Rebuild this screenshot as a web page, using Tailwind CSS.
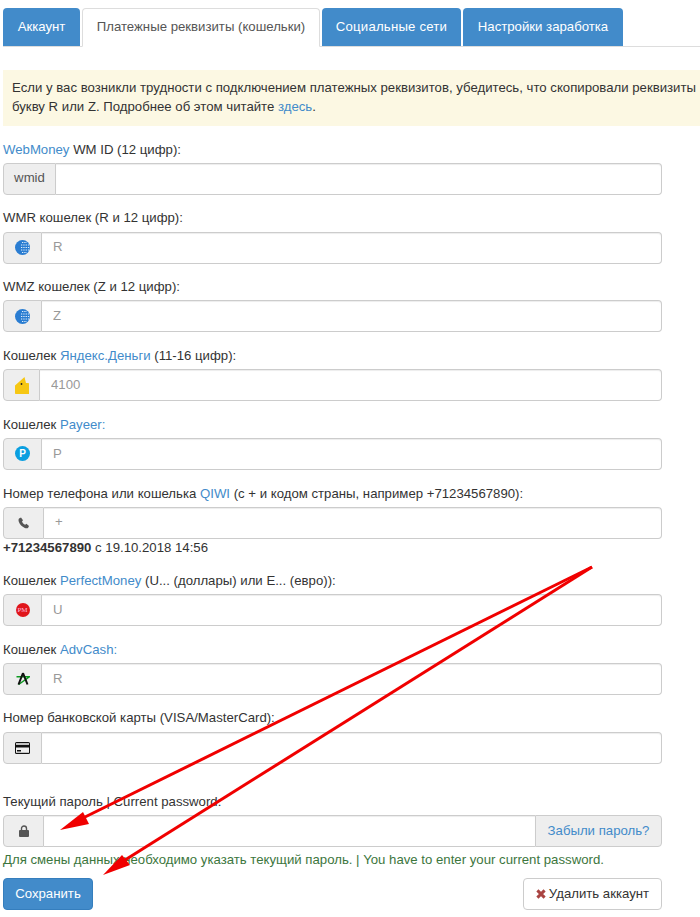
<!DOCTYPE html>
<html lang="ru">
<head>
<meta charset="utf-8">
<script src="https://cdn.jsdelivr.net/npm/@tailwindcss/browser@4"></script>
<title>Платежные реквизиты</title>
</head>
<body class="bg-white">
<div class="relative w-[700px] h-[917px] overflow-hidden font-['Liberation_Sans',Arial,sans-serif] text-[13.2px] leading-[18.6px] text-[#333]">
  <div class="pl-[3px] pt-[8px]">
    <div class="flex h-[39px] border-b border-[#ddd] items-start">
      <a class="w-[77px] h-[38px] flex items-center justify-center rounded-t-[4px] bg-[#428bca] text-white">Аккаунт</a>
      <a class="ml-[2px] w-[238px] h-[39px] flex items-center justify-center rounded-t-[4px] bg-white text-[#555] border border-[#ddd] border-b-white">Платежные реквизиты (кошельки)</a>
      <a class="ml-[2px] w-[139px] h-[38px] flex items-center justify-center rounded-t-[4px] bg-[#428bca] text-white tracking-[0.2px]">Социальные сети</a>
      <a class="ml-[2px] w-[160px] h-[38px] flex items-center justify-center rounded-t-[4px] bg-[#428bca] text-white">Настройки заработка</a>
    </div>

    <div class="mt-[23px] h-[56px] bg-[#fcf8e3] pl-[9px] pt-[9px] whitespace-nowrap overflow-hidden">
      <p>Если у вас возникли трудности с подключением платежных реквизитов, убедитесь, что скопировали реквизиты</p>
      <p>букву R или Z. Подробнее об этом читайте <a class="text-[#428bca]">здесь</a>.</p>
    </div>

    <div class="w-[659px] mt-[14.6px]">
      <div class="mb-[14.6px]">
        <label class="block mb-[3.6px]"><a class="text-[#428bca]">WebMoney</a> WM ID (12 цифр):</label>
        <div class="flex h-[32px]">
          <span class="w-[53px] flex items-center justify-center bg-[#eee] border border-[#ccc] rounded-l-[4px] text-[#555]">wmid</span>
          <input class="flex-1 min-w-0 border border-l-0 border-[#ccc] rounded-r-[4px] px-[11px] shadow-[inset_0_1px_1px_rgba(0,0,0,0.075)]">
        </div>
      </div>

      <div class="mb-[14.6px]">
        <label class="block mb-[3.6px]">WMR кошелек (R и 12 цифр):</label>
        <div class="flex h-[32px]">
          <span class="w-[39px] flex items-center justify-center bg-[#eee] border border-[#ccc] rounded-l-[4px]">
            <svg width="15" height="15" viewBox="0 0 15 15"><circle cx="7.5" cy="7.5" r="7.5" fill="#2a7dd2"/><path d="M7 2.5h5M6 5h8M6 7.5h8.500M6 10h8M7 12.5h5" stroke="#e4eff9" stroke-width="1.100" fill="none" stroke-dasharray="1.300 1"/></svg>
          </span>
          <input placeholder="R" class="flex-1 min-w-0 border border-l-0 border-[#ccc] rounded-r-[4px] px-[11px] placeholder:text-[#999] shadow-[inset_0_1px_1px_rgba(0,0,0,0.075)]">
        </div>
      </div>

      <div class="mb-[14.6px]">
        <label class="block mb-[3.6px]">WMZ кошелек (Z и 12 цифр):</label>
        <div class="flex h-[32px]">
          <span class="w-[39px] flex items-center justify-center bg-[#eee] border border-[#ccc] rounded-l-[4px]">
            <svg width="15" height="15" viewBox="0 0 15 15"><circle cx="7.5" cy="7.5" r="7.5" fill="#2a7dd2"/><path d="M7 2.5h5M6 5h8M6 7.5h8.500M6 10h8M7 12.5h5" stroke="#e4eff9" stroke-width="1.100" fill="none" stroke-dasharray="1.300 1"/></svg>
          </span>
          <input placeholder="Z" class="flex-1 min-w-0 border border-l-0 border-[#ccc] rounded-r-[4px] px-[11px] placeholder:text-[#999] shadow-[inset_0_1px_1px_rgba(0,0,0,0.075)]">
        </div>
      </div>

      <div class="mb-[14.6px]">
        <label class="block mb-[3.6px]">Кошелек <a class="text-[#428bca]">Яндекс.Деньги</a> (11-16 цифр):</label>
        <div class="flex h-[32px]">
          <span class="w-[37px] flex items-center justify-center bg-[#eee] border border-[#ccc] rounded-l-[4px]">
            <svg width="14" height="17" viewBox="0 0 14 17"><path d="M0 8.500 9.500 0 11 6h2c.6 0 1 .4 1 1v10H1c-.6 0-1-.4-1-1z" fill="#f6c713"/><circle cx="6.500" cy="7" r=".9" fill="#222"/></svg>
          </span>
          <input placeholder="4100" class="flex-1 min-w-0 border border-l-0 border-[#ccc] rounded-r-[4px] px-[11px] placeholder:text-[#999] shadow-[inset_0_1px_1px_rgba(0,0,0,0.075)]">
        </div>
      </div>

      <div class="mb-[14.6px]">
        <label class="block mb-[3.6px]">Кошелек <a class="text-[#428bca]">Payeer:</a></label>
        <div class="flex h-[32px]">
          <span class="w-[39px] flex items-center justify-center bg-[#eee] border border-[#ccc] rounded-l-[4px]">
            <span class="w-[15px] h-[15px] rounded-full bg-[#0b9fe0] text-white text-[10px] leading-[15px] font-bold text-center">P</span>
          </span>
          <input placeholder="P" class="flex-1 min-w-0 border border-l-0 border-[#ccc] rounded-r-[4px] px-[11px] placeholder:text-[#999] shadow-[inset_0_1px_1px_rgba(0,0,0,0.075)]">
        </div>
      </div>

      <div class="mb-[14.6px]">
        <label class="block mb-[3.6px]">Номер телефона или кошелька <a class="text-[#428bca]">QIWI</a> (с + и кодом страны, например +71234567890):</label>
        <div class="flex h-[32px]">
          <span class="w-[41px] flex items-center justify-center bg-[#eee] border border-[#ccc] rounded-l-[4px]">
            <svg width="12" height="12" viewBox="0 0 12 12"><path d="M1 1.600 3 .6l2 2.600-1 1.300c.5 1.400 1.700 2.700 3.200 3.300l1.200-1L11 8.900l-1 2c-.8.600-2 .6-3.200.1C4 9.800 1.800 7.500.8 4.800.4 3.500.4 2.400 1 1.600z" fill="#555"/></svg>
          </span>
          <input placeholder="+" class="flex-1 min-w-0 border border-l-0 border-[#ccc] rounded-r-[4px] px-[11px] placeholder:text-[#999] shadow-[inset_0_1px_1px_rgba(0,0,0,0.075)]">
        </div>
        <p><b>+71234567890</b> с 19.10.2018 14:56</p>
      </div>

      <div class="mb-[14.6px]">
        <label class="block mb-[3.6px]">Кошелек <a class="text-[#428bca]">PerfectMoney</a> (U... (доллары) или E... (евро)):</label>
        <div class="flex h-[32px]">
          <span class="w-[39px] flex items-center justify-center bg-[#eee] border border-[#ccc] rounded-l-[4px]">
            <span class="w-[14px] h-[14px] rounded-full bg-[#e0161b] text-[#fbd] text-[7px] leading-[14px] text-center font-['Liberation_Serif',serif]">PM</span>
          </span>
          <input placeholder="U" class="flex-1 min-w-0 border border-l-0 border-[#ccc] rounded-r-[4px] px-[11px] placeholder:text-[#999] shadow-[inset_0_1px_1px_rgba(0,0,0,0.075)]">
        </div>
      </div>

      <div class="mb-[14.6px]">
        <label class="block mb-[3.6px]">Кошелек <a class="text-[#428bca]">AdvCash:</a></label>
        <div class="flex h-[32px]">
          <span class="w-[39px] flex items-center justify-center bg-[#eee] border border-[#ccc] rounded-l-[4px]">
            <svg width="14" height="13" viewBox="0 0 14 13"><path d="M.5 4.800h13L2.500 12.500" fill="none" stroke="#0c9a20" stroke-width="1.500"/><path d="M7 1 2.500 12.500M7 1l4.500 11.500" stroke="#111" stroke-width="2" fill="none"/></svg>
          </span>
          <input placeholder="R" class="flex-1 min-w-0 border border-l-0 border-[#ccc] rounded-r-[4px] px-[11px] placeholder:text-[#999] shadow-[inset_0_1px_1px_rgba(0,0,0,0.075)]">
        </div>
      </div>

      <div class="mb-[29px]">
        <label class="block mb-[3.6px]">Номер банковской карты (VISA/MasterCard):</label>
        <div class="flex h-[32px]">
          <span class="w-[39px] flex items-center justify-center bg-[#eee] border border-[#ccc] rounded-l-[4px]">
            <svg width="15" height="12" viewBox="0 0 15 12"><rect width="15" height="12" rx="1.500" fill="#111"/><rect x="1" y="1.200" width="13" height="1.600" fill="#eee"/><rect x="1" y="5.500" width="13" height="5.300" fill="#eee"/><rect x="2" y="8" width="4" height="1.500" fill="#111"/></svg>
          </span>
          <input class="flex-1 min-w-0 border border-l-0 border-[#ccc] rounded-r-[4px] px-[11px] shadow-[inset_0_1px_1px_rgba(0,0,0,0.075)]">
        </div>
      </div>

      <div>
        <label class="block mb-[3.6px]">Текущий пароль | Current password:</label>
        <div class="flex h-[32px]">
          <span class="w-[41px] flex items-center justify-center bg-[#eee] border border-[#ccc] rounded-l-[4px]">
            <svg width="10" height="12" viewBox="0 0 10 12"><path d="M2.500 5V3.500a2.500 2.500 0 0 1 5 0V5" fill="none" stroke="#555" stroke-width="1.400"/><rect y="5" width="10" height="7" rx="1" fill="#555"/></svg>
          </span>
          <input type="password" class="flex-1 min-w-0 border-y border-[#ccc] px-[11px] shadow-[inset_0_1px_1px_rgba(0,0,0,0.075)]">
          <span class="w-[127px] flex items-center justify-center bg-[#eee] border border-[#ccc] rounded-r-[4px] text-[#428bca]">Забыли пароль?</span>
        </div>
        <p class="mt-[4px] text-[#3c763d]">Для смены данных необходимо указать текущий пароль. | You have to enter your current password.</p>
      </div>

      <div class="mt-[9px] flex justify-between">
        <button class="w-[90px] h-[32px] rounded-[4px] bg-[#428bca] border border-[#357ebd] text-white">Сохранить</button>
        <button class="w-[139px] h-[32px] rounded-[4px] bg-white border border-[#ccc] text-[#333] flex items-center justify-center gap-[3px]">
          <svg width="10" height="10" viewBox="0 0 10 10"><path d="M1.400 1.400l7.200 7.200M8.600 1.400 1.400 8.600" stroke="#a94442" stroke-width="3"/></svg>
          Удалить аккаунт
        </button>
      </div>
    </div>
  </div>

  <svg class="absolute inset-0 pointer-events-none" width="700" height="917" viewBox="0 0 700 917">
    <path d="M592 567 83 818" stroke="#f00000" stroke-width="3" fill="none"/>
    <path d="M60 830 83 812 89 824z" fill="#f00000"/>
    <path d="M592 567 125 860" stroke="#f00000" stroke-width="3" fill="none"/>
    <path d="M103 875 122 855 130 865z" fill="#f00000"/>
  </svg>
</div>
</body>
</html>
